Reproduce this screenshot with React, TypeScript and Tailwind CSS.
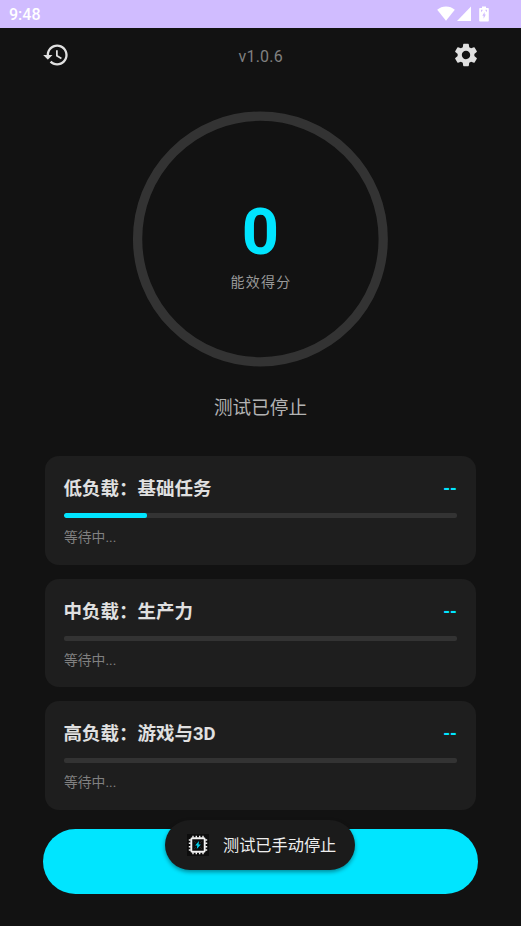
const TASKS = [
  { title: "低负载：基础任务", progress: 21, status: "等待中...", score: "--" },
  { title: "中负载：生产力", progress: 0, status: "等待中...", score: "--" },
  { title: "高负载：游戏与3D", progress: 0, status: "等待中...", score: "--" },
];

function StatusBar() {
  return (
    <div className="flex h-7 items-center justify-between bg-[#d0bcff] pl-[9px] pr-8 text-white">
      <span className="text-base font-medium leading-7 pt-px">9:48</span>
      <div className="flex items-center">
        <svg className="-mt-px" width="18" height="15" viewBox="0 0 18 15" fill="currentColor">
          <path d="M9 14.700 0.200 3.800C2.600 1.600 5.600.4 9 .4s6.400 1.200 8.800 3.400z" />
        </svg>
        <svg className="ml-0.5 -mt-px" width="14" height="15" viewBox="0 0 14 15" fill="currentColor">
          <path d="M14 .5V15H0z" />
        </svg>
        <svg className="ml-2 -mt-px" width="10" height="16" viewBox="0 0 10 16">
          <path fill="currentColor" d="M3 .5h4V2h2a.8.8 0 0 1 .8.8v12a.8.8 0 0 1-.8.8H1a.8.8 0 0 1-.8-.8v-12A.8.8 0 0 1 1 2h2z" />
          <path fill="#d0bcff" d="M5.600 6v2.500h1.200L4.600 12.800V9.700H3.300zM2 3.800h1.600v.9H2.900v1.100H2zM6.400 3.800H8v2H7.200v-1H6.400z" />
        </svg>
      </div>
    </div>
  );
}

function HistoryIcon() {
  return (
    <svg width="28" height="28" viewBox="0 0 24 24" fill="currentColor">
      <path d="M13 3c-4.970 0-9 4.030-9 9H1l3.890 3.890.07.14L9 12H6c0-3.870 3.130-7 7-7s7 3.130 7 7-3.130 7-7 7c-1.930 0-3.680-.79-4.940-2.060l-1.420 1.420C8.270 19.990 10.510 21 13 21c4.970 0 9-4.030 9-9s-4.030-9-9-9zm-1 5v5l4.280 2.540.72-1.210-3.500-2.080V8z" />
    </svg>
  );
}

function SettingsIcon() {
  return (
    <svg width="28" height="28" viewBox="0 0 24 24" fill="currentColor">
      <path d="M19.140 12.940c.04-.3.06-.61.06-.94 0-.32-.02-.64-.07-.94l2.030-1.580a.49.49 0 0 0 .12-.61l-1.920-3.320a.488.488 0 0 0-.59-.22l-2.390.96c-.5-.38-1.030-.7-1.620-.94l-.36-2.540a.484.484 0 0 0-.48-.41h-3.840c-.24 0-.43.17-.47.41l-.36 2.540c-.59.24-1.130.57-1.620.94l-2.390-.96c-.22-.08-.47 0-.59.22L2.740 8.870c-.12.21-.08.47.12.61l2.030 1.580c-.05.3-.09.63-.09.94s.02.64.07.94l-2.030 1.580a.49.49 0 0 0-.12.61l1.920 3.320c.12.22.37.29.59.22l2.390-.96c.5.38 1.030.7 1.620.94l.36 2.540c.05.24.24.41.48.41h3.840c.24 0 .44-.17.47-.41l.36-2.540c.59-.24 1.130-.56 1.620-.94l2.390.96c.22.08.47 0 .59-.22l1.920-3.320c.12-.22.07-.47-.12-.61zM12 15.600A3.610 3.610 0 0 1 8.400 12c0-1.980 1.620-3.600 3.600-3.600s3.600 1.620 3.600 3.600-1.620 3.600-3.600 3.600z" />
    </svg>
  );
}

function ChipIcon() {
  return (
    <svg width="22" height="22" viewBox="0 0 22 22" fill="none">
      <rect width="22" height="22" fill="#0d0d0d" />
      <rect x="4.300" y="4.300" width="13.400" height="13.400" rx="1" stroke="#f2f2f2" strokeWidth="1.900" />
      <path
        stroke="#f2f2f2"
        strokeWidth="1.400"
        d="M6 1.800v2M9.300 1.800v2M12.700 1.800v2M16 1.800v2M6 18.200v2M9.300 18.200v2M12.700 18.200v2M16 18.200v2M1.800 6h2M1.800 9.300h2M1.800 12.700h2M1.800 16h2M18.200 6h2M18.200 9.300h2M18.200 12.700h2M18.200 16h2"
      />
      <path stroke="#2b2b2b" strokeWidth="0.800" d="M7 7l2 2M15 7l-2 2M7 15l2-2M15 15l-2-2" />
      <path fill="#00d5f0" d="M12 7 8.200 11.400h2.100L9.800 15l4-4.500h-2.300z" />
    </svg>
  );
}

export default function App() {
  return (
    <div className="h-[926px] w-[521px] overflow-hidden bg-[#121212] font-[Roboto,'Noto_Sans_CJK_SC',sans-serif]">
      <StatusBar />

      <header className="flex h-[55px] items-center justify-between pl-[42px] pr-[41.500px] text-[#e0e0e0]">
        <button type="button" className="-mt-px">
          <HistoryIcon />
        </button>
        <span className="pt-[3px] text-base tracking-[0.200px] text-[#808080]">v1.0.6</span>
        <button type="button" className="-mt-px">
          <SettingsIcon />
        </button>
      </header>

      <div className="relative ml-[132px] mt-7 size-[256px] text-center">
        <svg className="absolute inset-0" width="256" height="256" fill="none">
          <circle cx="128.400" cy="128" r="122.800" stroke="#333333" strokeWidth="9.300" />
        </svg>
        <div className="pt-[76px] pl-px text-[65px] font-bold leading-[90px] text-[#00e5ff]">0</div>
        <div className="-mt-[5px] pl-[2px] text-[14px] leading-5 tracking-[1.300px] text-[#999999]">能效得分</div>
      </div>

      <div className="mt-[27px] text-center text-[18.600px] leading-7 text-[#b3b3b3]">测试已停止</div>

      <div className="mt-[34px] flex flex-col gap-[14px] px-[45px]">
        {TASKS.map((task) => (
          <div key={task.title} className="h-[108.700px] rounded-[14px] bg-[#1e1e1e] px-[19px] pt-[20px]">
            <div className="flex h-[26px] items-center justify-between text-[18.500px] font-bold leading-[26px]">
              <span className="-ml-[0.5px] text-[#e0e0e0]">{task.title}</span>
              <span className="text-[17.500px] text-[#00e5ff]">{task.score}</span>
            </div>
            <div className="mt-[11px] h-[5px] overflow-hidden rounded-[2px] bg-[#333333]">
              <div className="h-full rounded-[2px] bg-[#00e5ff]" style={{ width: `${task.progress}%` }} />
            </div>
            <div className="mt-[9px] text-[13.800px] leading-5 text-[#808080]">{task.status}</div>
          </div>
        ))}
      </div>

      <div className="relative mx-[43px] mt-[19px]">
        <button type="button" className="block h-[65px] w-full rounded-full bg-[#00e5ff]" />
        <div className="absolute -top-[9px] left-[122.400px] flex h-[50px] w-[190px] items-center rounded-full bg-[#1b1b1b] pl-[21.600px] shadow-[0_2px_4px_rgba(0,0,0,0.4)]">
          <ChipIcon />
          <span className="ml-[14px] whitespace-nowrap pt-[2px] text-[16.200px] text-[#eeeeee]">测试已手动停止</span>
        </div>
      </div>
    </div>
  );
}
